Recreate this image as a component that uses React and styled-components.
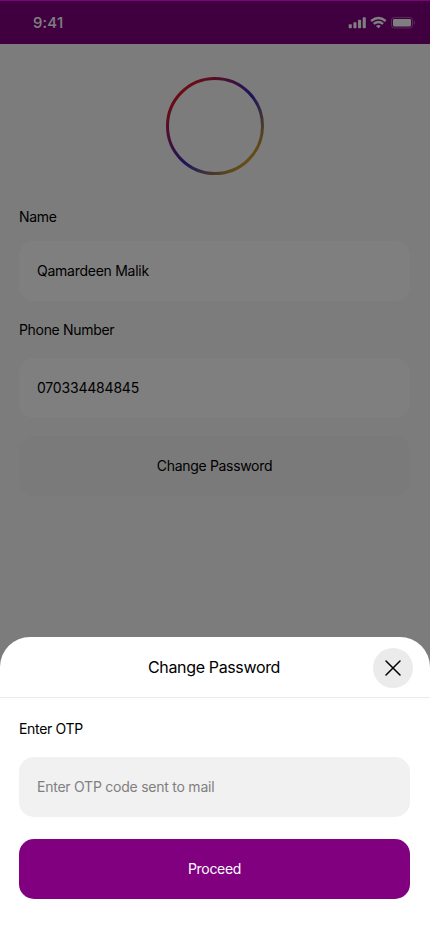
import React from "react";
import styled, { createGlobalStyle } from "styled-components";

const Global = createGlobalStyle`
  * { box-sizing: border-box; }
  body { margin: 0; font-family: Inter, "Liberation Sans", sans-serif; color: #000; }
  button, input { font: inherit; color: inherit; border: 0; padding: 0; margin: 0; outline: 0; }
`;

const Screen = styled.div`
  position: relative;
  width: 430px;
  height: 932px;
  overflow: hidden;
  background: #f8f8f8;
`;

const StatusBar = styled.header`
  height: 44px;
  padding: 2px 15px 0 33px;
  display: flex;
  align-items: center;
  justify-content: space-between;
  background: #800080;
  color: #fff;
`;

const Time = styled.span`
  font-size: 15px;
  line-height: 18px;
  font-weight: 500;
  letter-spacing: 0.15px;
`;

const Profile = styled.main`
  padding: 33px 20px 0 19px;
  display: flex;
  flex-direction: column;
`;

const Avatar = styled.svg`
  align-self: center;
  margin-bottom: 32px;
`;

const Label = styled.label`
  display: block;
  font-size: 14px;
  line-height: 20px;
  letter-spacing: -0.32px;
`;

const Field = styled.input`
  display: block;
  width: 100%;
  height: 60px;
  margin-top: ${(p) => p.$gap}px;
  margin-bottom: ${(p) => p.$after}px;
  padding: 0 18px 2px;
  border-radius: 15px;
  background: ${(p) => p.$fill || "#fff"};
  font-size: 14px;
  letter-spacing: ${(p) => p.$tracking}px;
  &::placeholder { color: #808080; opacity: 1; }
`;

const Button = styled.button`
  width: 100%;
  height: 60px;
  padding-bottom: 2px;
  border-radius: 15px;
  font-size: 14px;
  letter-spacing: -0.32px;
  background: ${(p) => (p.$primary ? "#800080" : "#f5f5f5")};
  color: ${(p) => (p.$primary ? "#fff" : "#000")};
`;

const Scrim = styled.div`
  position: absolute;
  inset: 1px 0 0;
  background: rgba(0, 0, 0, 0.5);
  display: flex;
  align-items: flex-end;
`;

const Sheet = styled.section`
  width: 100%;
  height: 295px;
  border-radius: 30px 30px 0 0;
  background: #fff;
`;

const SheetHeader = styled.div`
  height: 61px;
  padding: 0 17px;
  display: grid;
  grid-template-columns: 40px 1fr 40px;
  align-items: center;
  border-bottom: 1px solid #ebebeb;
`;

const Title = styled.h2`
  grid-column: 2;
  margin: 0 0 0 -2px;
  text-align: center;
  font-size: 16px;
  line-height: 22px;
  font-weight: 400;
  letter-spacing: -0.35px;
`;

const Close = styled.button`
  width: 40px;
  height: 40px;
  margin-top: 1px;
  border-radius: 50%;
  background: #ebebeb;
  display: grid;
  place-items: center;
`;

const Form = styled.div`
  padding: 21px 20px 0 19px;
`;

function StatusIcons() {
  return (
    <svg width="67" height="14" viewBox="0 0 67 14" fill="#fff">
      <rect x="0.7" y="8.3" width="3.1" height="4" rx="0.8" />
      <rect x="5.4" y="6.3" width="3.1" height="6" rx="0.8" />
      <rect x="10" y="3.8" width="3.1" height="8.5" rx="0.8" />
      <rect x="14.7" y="1.3" width="3.1" height="11" rx="0.8" />
      <g fill="none" stroke="#fff" strokeWidth="2.3">
        <path d="M23.1 5Q30.4-.9 37.7 5" />
        <path d="M25.7 7.9Q30.4 4.1 35.1 7.9" />
      </g>
      <path d="M28 9.9Q30.4 8.1 32.8 9.9L30.4 12.3Z" />
      <rect x="43.5" y="1.4" width="21" height="10.6" rx="2.8" fill="none" stroke="#fff" strokeOpacity="0.35" />
      <rect x="45" y="3" width="18" height="7.4" rx="1.3" />
      <path d="M65.8 4.8v4c1.3-.5 1.3-3.5 0-4" opacity="0.4" />
    </svg>
  );
}

export default function App() {
  return (
    <>
      <Global />
      <Screen>
        <StatusBar>
          <Time>9:41</Time>
          <StatusIcons />
        </StatusBar>
        <Profile>
          <Avatar width="98" height="98" viewBox="0 0 98 98">
            <defs>
              <linearGradient id="ring" gradientUnits="userSpaceOnUse" x1="14" y1="14" x2="84" y2="84">
                <stop offset="0" stopColor="#dc1822" />
                <stop offset="0.55" stopColor="#3528b8" />
                <stop offset="1" stopColor="#d2a024" />
              </linearGradient>
            </defs>
            <circle cx="49" cy="49" r="47.5" fill="none" stroke="url(#ring)" strokeWidth="3" />
          </Avatar>
          <Label>Name</Label>
          <Field readOnly value="Qamardeen Malik" $tracking={-0.26} $gap={14} $after={19} />
          <Label>Phone Number</Label>
          <Field readOnly value="070334484845" $tracking={-0.2} $gap={18} $after={18} />
          <Button>Change Password</Button>
        </Profile>
        <Scrim>
          <Sheet>
            <SheetHeader>
              <Title>Change Password</Title>
              <Close aria-label="Close">
                <svg width="18" height="18" viewBox="0 0 18 18" fill="none" stroke="#000" strokeWidth="1.5" strokeLinecap="round">
                  <path d="M2 2L16 16M16 2L2 16" />
                </svg>
              </Close>
            </SheetHeader>
            <Form>
              <Label>Enter OTP</Label>
              <Field placeholder="Enter OTP code sent to mail" $tracking={-0.24} $fill="#f1f1f1" $gap={18} $after={22} />
              <Button $primary>Proceed</Button>
            </Form>
          </Sheet>
        </Scrim>
      </Screen>
    </>
  );
}
